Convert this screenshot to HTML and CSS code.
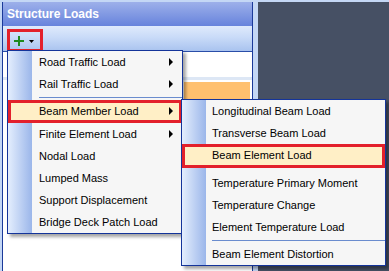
FILE: index.html
```html
<!DOCTYPE html>
<html>
<head>
<meta charset="utf-8">
<link rel="stylesheet" href="styles.css">
</head>
<body>
<div class="screen">
  <div class="panel">
    <div class="title">Structure Loads</div>
    <div class="toolbar">
      <div class="addbtn">
        <svg class="plus" width="10" height="10" viewBox="0 0 10 10"><path d="M4 0h2v4h4v2H6v4H4V6H0V4h4z" fill="#1f8a1f"/></svg>
        <svg class="caret" width="5" height="3" viewBox="0 0 5 3"><path d="M0 0h5L2.5 3z" fill="#000"/></svg>
      </div>
    </div>
    <div class="body">
      <div class="row"></div>
      <div class="divider"></div>
      <div class="row sel"></div>
    </div>
  </div>
  <div class="dark"></div>
</div>

<div class="menu main">
  <div class="item sub">Road Traffic Load</div>
  <div class="item sub">Rail Traffic Load</div>
  <div class="sep"></div>
  <div class="item sub hot">Beam Member Load</div>
  <div class="item sub">Finite Element Load</div>
  <div class="item">Nodal Load</div>
  <div class="item">Lumped Mass</div>
  <div class="item">Support Displacement</div>
  <div class="item">Bridge Deck Patch Load</div>
</div>

<div class="menu submenu">
  <div class="item">Longitudinal Beam Load</div>
  <div class="item">Transverse Beam Load</div>
  <div class="item hot">Beam Element Load</div>
  <div class="sep blank"></div>
  <div class="item">Temperature Primary Moment</div>
  <div class="item">Temperature Change</div>
  <div class="item">Element Temperature Load</div>
  <div class="sep"></div>
  <div class="item">Beam Element Distortion</div>
</div>
</body>
</html>
```
FILE: styles.css
```css
* { box-sizing: border-box; }
html, body { margin: 0; padding: 0; }
body {
  width: 389px;
  height: 271px;
  overflow: hidden;
  background: #c4d7f5;
  font-family: "Liberation Sans", Arial, sans-serif;
  font-size: 11px;
  color: #000;
  position: relative;
}
.screen {
  display: flex;
  gap: 5px;
  padding: 2px 0 0 2px;
  height: 271px;
}
.panel {
  width: 251px;
  height: 269px;
  border-left: 1px solid #1b3a9a;
  border-right: 1px solid #1b3a9a;
  background: #fff;
  display: flex;
  flex-direction: column;
}
.title {
  height: 24px;
  background: linear-gradient(#9db0ea, #6783dc);
  color: #fff;
  font-weight: bold;
  font-size: 12px;
  padding: 5px 0 0 4px;
}
.toolbar {
  height: 26px;
  background: linear-gradient(#dfeafc 0%, #c9dbf8 45%, #a9c3ef 100%);
  border-bottom: 1px solid #2a4ea8;
  padding: 3px 0 0 4px;
}
.addbtn {
  width: 36px;
  height: 23px;
  border: 3px solid #e3202b;
  display: flex;
  align-items: center;
  padding-left: 4px;
  gap: 5px;
}
.plus { display: block; }
.caret { display: block; margin-top: 1px; }
.body { flex: 1; }
.row { height: 25px; }
.divider { height: 3px; background: #dde7f5; }
.row.sel {
  height: 18px;
  margin: 2px 2px 0 181px;
  background: #ffc06e;
}
.dark {
  flex: 1;
  background: #465064;
}
.menu {
  position: absolute;
  border: 1px solid #14349a;
  background: linear-gradient(to right, #e4eefd 0, #9bb6ea 24px, #f6f6f6 24px);
  box-shadow: 3px 3px 3px rgba(0, 0, 0, 0.35);
  display: flex;
  flex-direction: column;
}
.main { left: 7px; top: 50px; width: 176px; }
.submenu { left: 181px; top: 99px; width: 205px; }
.item {
  height: 22px;
  line-height: 22px;
  padding-left: 31px;
  position: relative;
  white-space: nowrap;
}
.submenu .item { padding-left: 30px; }
.item.sub::after {
  content: "";
  position: absolute;
  right: 9px;
  top: 7px;
  border-left: 4px solid #000;
  border-top: 4px solid transparent;
  border-bottom: 4px solid transparent;
}
.item.hot {
  background: #ffefc6;
  border: 3px solid #e3202b;
  line-height: 16px;
  padding-left: 28px;
  height: 23px;
}
.submenu .item.hot { padding-left: 27px; height: 24px; line-height: 17px; }
.item.hot.sub::after { right: 6px; top: 4px; }
.sep {
  height: 5px;
  position: relative;
}
.sep::before {
  content: "";
  position: absolute;
  left: 31px;
  right: 0;
  top: 2px;
  height: 1px;
  background: #6a8cce;
}
.submenu .sep::before { left: 30px; }
.sep.blank { height: 4px; }
.sep.blank::before { display: none; }
```
